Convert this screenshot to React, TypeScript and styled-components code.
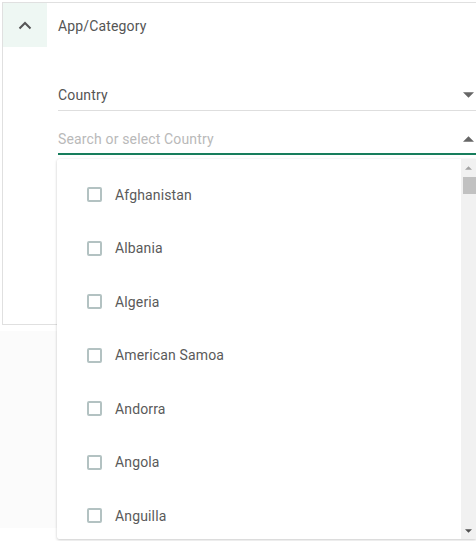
import React from "react";
import styled, { createGlobalStyle } from "styled-components";

const Global = createGlobalStyle`
  html, body { margin: 0; padding: 0; background: #ffffff; }
  body { font-family: Roboto, "Noto Sans", Arial, sans-serif; overflow: hidden; letter-spacing: 0.15px; }
  * { box-sizing: border-box; }
`;

const Page = styled.div`
  position: relative;
  width: 476px;
  height: 541px;
  overflow: hidden;
  padding-top: 2px;
`;

const Card = styled.div`
  margin-left: 2px;
  width: 500px;
  height: 323px;
  border: 1px solid #e0e0e0;
  background: #fff;
`;

const Header = styled.div`
  display: flex;
  align-items: center;
  height: 44px;
`;

const IconBox = styled.div`
  width: 44px;
  height: 44px;
  background: #eef7f3;
  display: flex;
  align-items: center;
  justify-content: center;
`;

const Title = styled.div`
  margin-left: 11px;
  font-size: 14px;
  color: #555;
  line-height: 20px;
  margin-top: 1px;
`;

const Form = styled.div`
  padding-left: 55px;
  padding-top: 34px;
  width: 473px;
`;

const Field = styled.div<{ $active?: boolean }>`
  display: flex;
  align-items: center;
  justify-content: space-between;
  height: ${(p) => (p.$active ? "44px" : "30px")};
  padding-top: ${(p) => (p.$active ? "18px" : "4px")};
  padding-bottom: ${(p) => (p.$active ? "4px" : "5px")};
  border-bottom: ${(p) => (p.$active ? "2px solid #177d5c" : "1px solid #dedede")};
  padding-right: 2px;
`;

const FieldText = styled.span<{ $placeholder?: boolean }>`
  font-size: 14px;
  line-height: 20px;
  color: ${(p) => (p.$placeholder ? "#b9b9b9" : "#555")};
`;

const Below = styled.div`
  margin-top: 6px;
  width: 60px;
  height: 197px;
  background: #fbfbfb;
`;

const Dropdown = styled.div`
  position: absolute;
  left: 57px;
  top: 159px;
  width: 419px;
  height: 380px;
  background: #fff;
  box-shadow: 0 1px 3px rgba(0, 0, 0, 0.2), 0 0 1px rgba(0, 0, 0, 0.08);
  border-radius: 2px 0 0 2px;
  display: flex;
  overflow: hidden;
`;

const List = styled.div`
  flex: 1;
  padding-top: 9px;
`;

const Item = styled.div`
  display: flex;
  align-items: center;
  height: 53.5px;
  padding-left: 30px;
`;

const Check = styled.span`
  width: 15px;
  height: 15px;
  border: 2px solid #b3c2c2;
  border-radius: 2px;
  margin-right: 13px;
  flex: none;
`;

const ItemText = styled.span`
  font-size: 14px;
  color: #5a5a5a;
  line-height: 20px;
`;

const Scrollbar = styled.div`
  width: 15px;
  background: #f1f1f1;
  display: flex;
  flex-direction: column;
  align-items: center;
`;

const ArrowBtn = styled.div`
  height: 17px;
  width: 15px;
  display: flex;
  align-items: center;
  justify-content: center;
`;

const Thumb = styled.div`
  width: 13px;
  height: 17px;
  margin-left: 2px;
  background: #c1c1c1;
  margin-top: 1px;
`;

const Spacer = styled.div`
  flex: 1;
`;

const Tri = ({ up, color = "#666", w = 11, h = 6 }: { up?: boolean; color?: string; w?: number; h?: number }) => (
  <svg width={w} height={h} viewBox="0 0 10 5">
    {up ? <path d="M0 5 L5 0 L10 5 Z" fill={color} /> : <path d="M0 0 L10 0 L5 5 Z" fill={color} />}
  </svg>
);

const countries = ["Afghanistan", "Albania", "Algeria", "American Samoa", "Andorra", "Angola", "Anguilla"];

export default function App() {
  return (
    <Page>
      <Global />
      <Card>
        <Header>
          <IconBox>
            <svg width="14" height="9" viewBox="0 0 14 9">
              <path d="M1.5 7.5 L7 2 L12.5 7.5" stroke="#555" strokeWidth="2" fill="none" />
            </svg>
          </IconBox>
          <Title>App/Category</Title>
        </Header>
        <Form>
          <Field>
            <FieldText>Country</FieldText>
            <Tri />
          </Field>
          <Field $active>
            <FieldText $placeholder>Search or select Country</FieldText>
            <Tri up />
          </Field>
        </Form>
      </Card>
      <Below />
      <Dropdown>
        <List>
          {countries.map((c) => (
            <Item key={c}>
              <Check />
              <ItemText>{c}</ItemText>
            </Item>
          ))}
        </List>
        <Scrollbar>
          <ArrowBtn>
            <Tri up color="#a3a3a3" w={7} h={4} />
          </ArrowBtn>
          <Thumb />
          <Spacer />
          <ArrowBtn>
            <Tri color="#505050" w={7} h={4} />
          </ArrowBtn>
        </Scrollbar>
      </Dropdown>
    </Page>
  );
}
